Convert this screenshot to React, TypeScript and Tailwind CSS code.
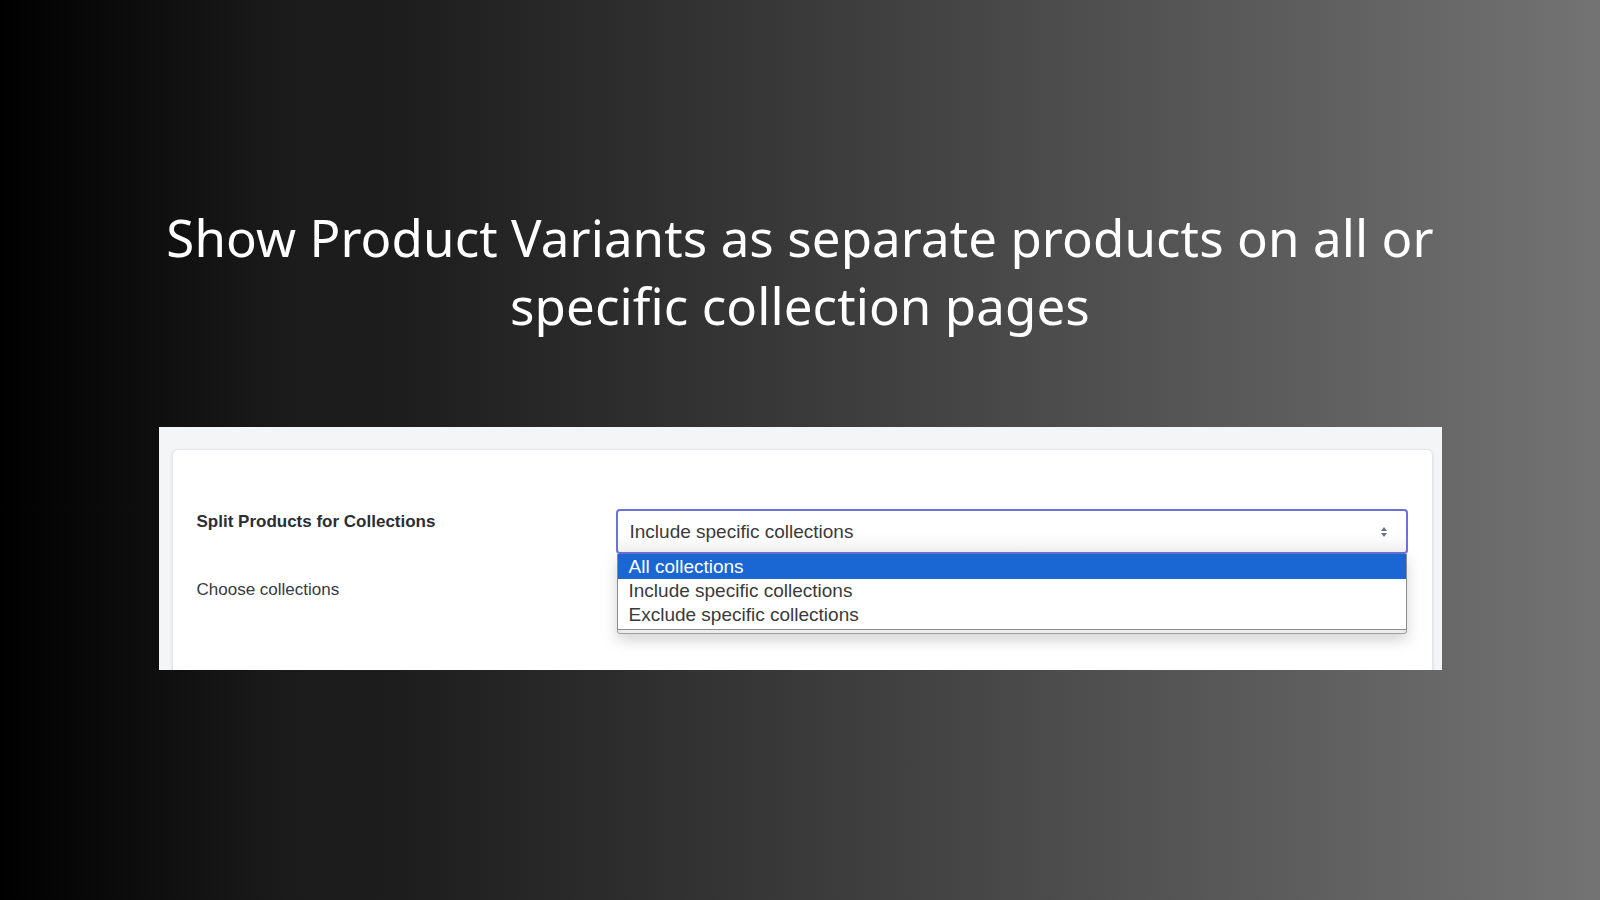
import React from "react";

const options = [
  "All collections",
  "Include specific collections",
  "Exclude specific collections",
];

const SelectArrows: React.FC = () => (
  <svg width="8" height="14" viewBox="0 0 8 14" className="text-[#6b717a]">
    <path d="M4 2 L7 6 L1 6 Z" fill="currentColor" />
    <path d="M4 12 L7 8 L1 8 Z" fill="currentColor" />
  </svg>
);

const App: React.FC = () => {
  return (
    <div className="flex h-[900px] w-full flex-col items-center overflow-hidden bg-[linear-gradient(to_right,#000000_0%,#1b1b1b_18%,#1d1d1d_25%,#737373_100%)]">
      {/* Headline */}
      <h1 className="mt-[203px] text-center font-['Noto_Sans',sans-serif] text-[51px] font-normal leading-[68px] tracking-[0.1px] text-white">
        Show Product Variants as separate products on all or
        <br />
        specific collection pages
      </h1>

      {/* Settings screenshot */}
      <div className="mt-[88px] h-[243px] w-[1283px] overflow-hidden bg-[#f4f5f7] pl-[13px] pr-[9px] pt-[22px] font-['Liberation_Sans',Arial,sans-serif]">
        <div className="h-[260px] rounded-md border border-[#e4e6ea] bg-white px-[24px] pt-[59px] shadow-sm">
          <div className="flex">
            <div className="w-[419px] shrink-0">
              <div className="pt-[3px] text-[17px] font-bold leading-[20px] text-[#2b2e33]">
                Split Products for Collections
              </div>
              <div className="mt-[48px] text-[17px] leading-[20px] text-[#363a40]">
                Choose collections
              </div>
            </div>

            <div className="relative flex-1">
              <div className="flex h-[45px] items-center justify-between rounded-[4px] border-2 border-[#6b73d4] bg-[linear-gradient(to_bottom,#ffffff_55%,#f1f1f1_100%)] pl-[12px] pr-[18px]">
                <span className="text-[19px] leading-[22px] text-[#3a3a3a]">
                  Include specific collections
                </span>
                <SelectArrows />
              </div>

              {/* Open option list */}
              <div className="absolute left-px right-px top-[45px] shadow-[0_6px_14px_rgba(0,0,0,0.18)]">
                <div className="border-x border-b border-[#8c8c8c] bg-white pb-[2px]">
                  {options.map((opt, i) => (
                    <div
                      key={opt}
                      className={
                        i === 0
                          ? "h-[25px] bg-[#1a67d3] pl-[11px] text-[19px] leading-[25px] text-white"
                          : "h-[24px] pl-[11px] text-[19px] leading-[24px] text-[#3a3a3a]"
                      }
                    >
                      {opt}
                    </div>
                  ))}
                </div>
                <div className="h-[4px] rounded-b-[3px] border-x border-b border-[#a0a0a0] bg-[#ececec]" />
              </div>
            </div>
          </div>
        </div>
      </div>
    </div>
  );
};

export default App;
